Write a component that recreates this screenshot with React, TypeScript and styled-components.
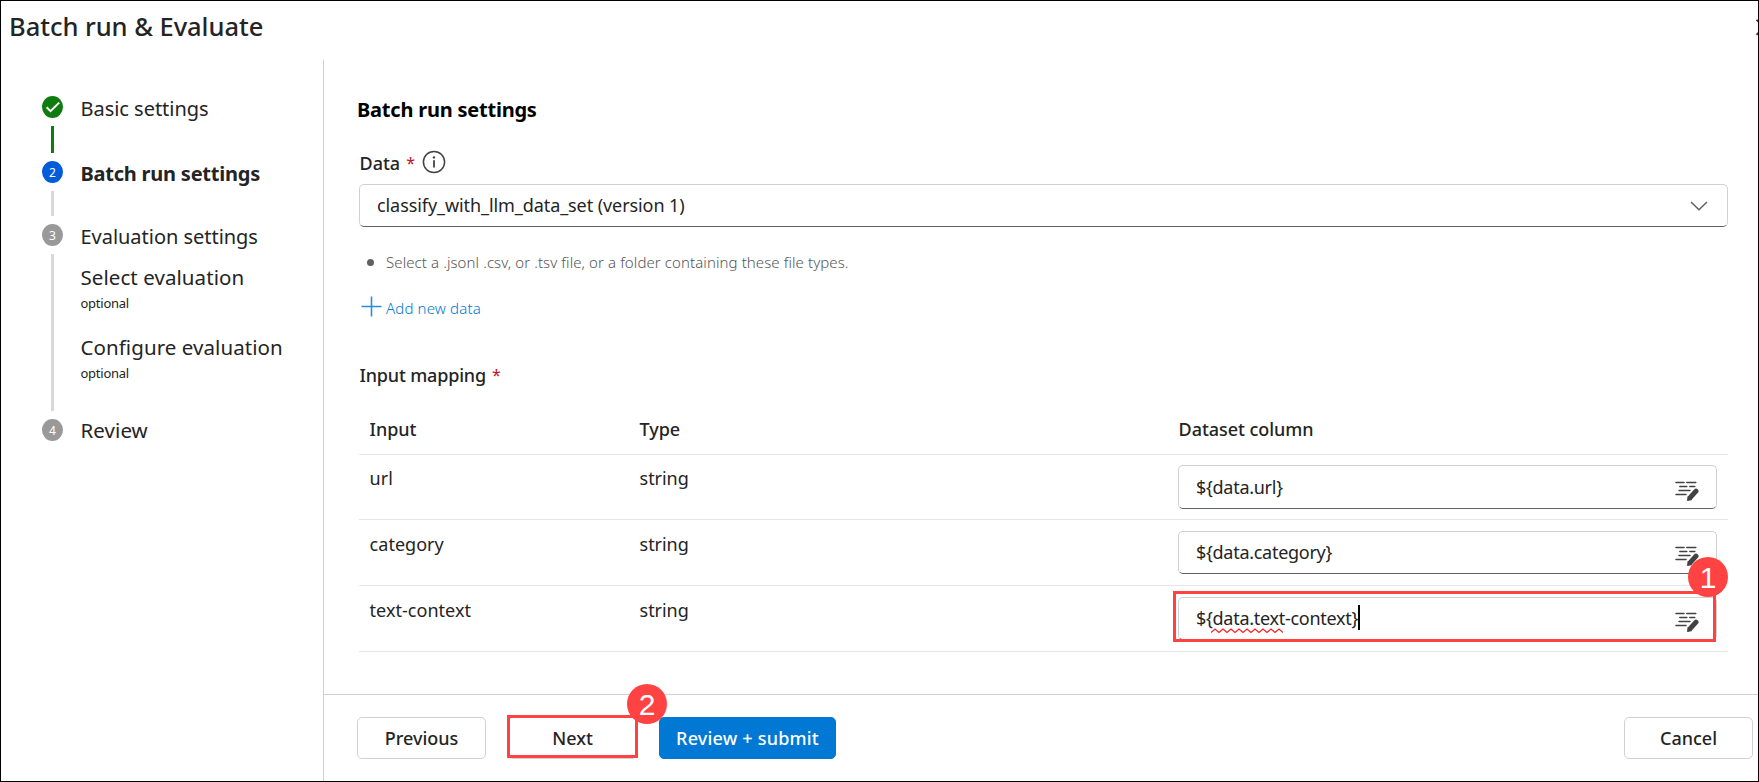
import React from "react";
import styled, { createGlobalStyle, css } from "styled-components";

const GlobalStyle = createGlobalStyle`
  * { box-sizing: border-box; }
  body {
    margin: 0;
    background: #fff;
    color: #242424;
    font-family: "Noto Sans", "Open Sans", sans-serif;
    font-size: 18px;
  }
`;

const Dialog = styled.div`
  width: 1759px;
  height: 782px;
  border: 1px solid #000;
  background: #fff;
  display: flex;
  flex-direction: column;
  overflow: hidden;
`;

const Header = styled.header`
  height: 59px;
  flex: none;
  display: flex;
  justify-content: space-between;
  padding: 9px 0 0 8px;
  overflow: hidden;
`;

const Title = styled.h1`
  margin: 0;
  font-size: 25.5px;
  line-height: 32px;
  font-weight: 480;
  letter-spacing: -0.04px;
  white-space: nowrap;
`;

const CloseButton = styled.span`
  flex: none;
  width: 16px;
  height: 17px;
  margin: 9px -14px 0 0;
  svg { display: block; }
`;

const Body = styled.div`
  flex: 1;
  display: flex;
  min-height: 0;
`;

const Sidebar = styled.nav`
  width: 323px;
  flex: none;
  border-right: 1px solid #d1d1d1;
  padding: 36px 0 0 41px;
`;

const Step = styled.div<{ $height: number }>`
  display: flex;
  gap: 17.5px;
  height: ${(p) => p.$height}px;
`;

const Rail = styled.div`
  width: 21px;
  flex: none;
  display: flex;
  flex-direction: column;
  align-items: center;
`;

const markerColors = { done: "#107c10", current: "#015cda", pending: "#999999" };
type StepState = keyof typeof markerColors;

const Marker = styled.span<{ $state: StepState }>`
  width: 21px;
  height: 22px;
  flex: none;
  border-radius: 50%;
  background: ${(p) => markerColors[p.$state]};
  color: #fff;
  font-size: 12px;
  line-height: 23px;
  text-align: center;
  svg { display: block; }
`;

const Connector = styled.span<{ $done?: boolean }>`
  width: 3px;
  flex: 1;
  margin: 8px 0;
  background: ${(p) => (p.$done ? "#107c10" : "#d8d8d8")};
`;

const StepBody = styled.div<{ $shift?: number }>`
  margin-top: ${(p) => p.$shift ?? -1}px;
  white-space: nowrap;
`;

const StepLabel = styled.div<{ $current?: boolean }>`
  font-size: 20px;
  line-height: 28px;
  letter-spacing: ${(p) => (p.$current ? "-0.23px" : "-0.03px")};
  font-weight: ${(p) => (p.$current ? 700 : 400)};
`;

const SubStep = styled.div`
  margin-top: 12px;
  & + & { margin-top: 21px; }
`;

const SubStepLabel = styled.div`
  font-size: 20.5px;
  line-height: 28px;
  letter-spacing: 0.07px;
`;

const Optional = styled.div`
  margin-top: 3px;
  font-size: 13px;
  line-height: 18px;
  letter-spacing: -0.25px;
`;

const Main = styled.main`
  flex: 1;
  min-width: 0;
  display: flex;
  flex-direction: column;
`;

const Content = styled.section`
  flex: 1;
  padding: 36px 30px 0 35px;
`;

const Heading = styled.h2`
  margin: 0 0 25px -2px;
  color: #000;
  font-size: 20px;
  line-height: 28px;
  font-weight: 700;
  letter-spacing: -0.22px;
`;

const FieldLabel = styled.div<{ $spacing?: number }>`
  display: flex;
  align-items: center;
  height: 28px;
  padding-left: 0.5px;
  font-size: 18px;
  line-height: 28px;
  font-weight: 500;
  letter-spacing: ${(p) => p.$spacing ?? 0}px;
  svg { display: block; margin: -2px 0 0 7px; }
`;

const Required = styled.span`
  margin-left: 6px;
  color: #c50f1f;
  font-size: 16px;
  font-weight: 400;
`;

const fieldFrame = css`
  border: 1px solid #d1d1d1;
  border-bottom-color: #616161;
  border-radius: 5px;
  background: #fff;
  display: flex;
  align-items: center;
  justify-content: space-between;
`;

const Select = styled.div`
  ${fieldFrame}
  height: 43px;
  margin-top: 7px;
  padding: 0 19px 0 17px;
  line-height: 28px;
  letter-spacing: -0.08px;
  span { margin-top: -2px; }
`;

const Hint = styled.ul`
  margin: 23px 0 0;
  padding: 0 0 0 8px;
  list-style: none;
  color: #565656;
  font-size: 15px;
  font-weight: 350;
  line-height: 24px;
  letter-spacing: 0.09px;
  li { display: flex; align-items: center; gap: 12px; }
  li::before {
    content: "";
    width: 7px;
    height: 7px;
    margin-top: 1px;
    border-radius: 50%;
    background: #616161;
  }
`;

const AddLink = styled.a`
  display: flex;
  align-items: center;
  gap: 4px;
  height: 24px;
  margin: 22px 0 41px 2px;
  color: #0078d4;
  font-size: 15px;
  font-weight: 360;
  line-height: 24px;
  letter-spacing: 0.15px;
  svg { display: block; margin-top: -3px; }
`;

const Table = styled.div`
  margin-top: 11px;
`;

const Row = styled.div<{ $head?: boolean; $first?: boolean }>`
  display: grid;
  grid-template-columns: 270px 539px 560px;
  align-items: start;
  height: ${(p) => (p.$head ? 55 : p.$first ? 65 : 66)}px;
  padding-top: ${(p) => (p.$head ? 15 : p.$first ? 9 : 10)}px;
  border-bottom: 1px solid #e6e6e6;
  line-height: 28px;
  font-weight: ${(p) => (p.$head ? 500 : 400)};
`;

const Cell = styled.div<{ $spacing?: number; $field?: boolean }>`
  padding: ${(p) => (p.$field ? "0 11px 0 10px" : "0 10px 0 10.6px")};
  letter-spacing: ${(p) => p.$spacing ?? -0.05}px;
`;

const MappingInput = styled.div<{ $tall?: boolean }>`
  ${fieldFrame}
  position: relative;
  height: ${(p) => (p.$tall ? 44 : 43)}px;
  margin-top: 1px;
  padding: 0 17px;
  letter-spacing: -0.28px;
  & > svg { display: block; margin-top: ${(p) => (p.$tall ? 8 : 7)}px; }
`;

const Value = styled.span<{ $lift?: boolean }>`
  position: relative;
  display: flex;
  align-items: center;
  margin-top: ${(p) => (p.$lift ? -2 : 0)}px;
`;

const Squiggle = styled.svg`
  position: absolute;
  left: 15px;
  top: 24px;
`;

const Caret = styled.span`
  width: 2px;
  height: 25px;
  background: #000;
`;

const Highlight = styled.span<{ $x: number; $y: number; $w: number; $h: number }>`
  position: absolute;
  left: ${(p) => p.$x}px;
  top: ${(p) => p.$y}px;
  width: ${(p) => p.$w}px;
  height: ${(p) => p.$h}px;
  border: 3px solid #ff4343;
  pointer-events: none;
`;

const Badge = styled.span<{ $x: number; $y: number }>`
  position: absolute;
  left: ${(p) => p.$x}px;
  top: ${(p) => p.$y}px;
  width: 40px;
  height: 40px;
  border-radius: 50%;
  background: #ff4343;
  color: #fff;
  font: 400 30px/41px "Liberation Sans", Arial, sans-serif;
  letter-spacing: 0;
  text-align: center;
  z-index: 1;
`;

const Footer = styled.footer`
  height: 87px;
  flex: none;
  display: flex;
  gap: 22px;
  padding: 22px 5px 0 33px;
  border-top: 1px solid #d1d1d1;
`;

const Button = styled.div<{ $primary?: boolean; $end?: boolean }>`
  position: relative;
  width: ${(p) => (p.$primary ? 177 : 129)}px;
  height: 42px;
  margin-left: ${(p) => (p.$end ? "auto" : "0")};
  border: 1px solid ${(p) => (p.$primary ? "#0078d4" : "#d1d1d1")};
  border-radius: 5px;
  background: ${(p) => (p.$primary ? "#0078d4" : "#fff")};
  color: ${(p) => (p.$primary ? "#fff" : "#242424")};
  font-weight: 500;
  line-height: 41px;
  letter-spacing: ${(p) => (p.$primary ? "0.2px" : "0")};
  text-align: center;
  white-space: nowrap;
`;

const CheckIcon = () => (
  <svg width="21" height="22" viewBox="0 0 21 22" fill="none" stroke="#fff" strokeWidth="2">
    <path d="M4.6 11.2l3.9 3.9L17.2 6.6" />
  </svg>
);

const CloseIcon = () => (
  <svg width="16" height="17" viewBox="0 0 16 17" fill="none" stroke="#333" strokeWidth="1.8">
    <path d="M0.5 0.8l15 15M0.5 15.8l15-15" />
  </svg>
);

const InfoIcon = () => (
  <svg width="24" height="24" viewBox="0 0 24 24" fill="none" stroke="#424242">
    <circle cx="12" cy="12" r="10.6" strokeWidth="1.5" />
    <path d="M12 10.2v7.3" strokeWidth="1.8" />
    <circle cx="12" cy="7.4" r="1.2" fill="#424242" stroke="none" />
  </svg>
);

const ChevronIcon = () => (
  <svg width="18" height="10" viewBox="0 0 18 10" fill="none" stroke="#616161" strokeWidth="1.5">
    <path d="M1 1l8 7.8L17 1" />
  </svg>
);

const PlusIcon = () => (
  <svg width="21" height="21" viewBox="0 0 21 21" fill="none" stroke="#2b8cdb" strokeWidth="1.6">
    <path d="M10.5 0.5v20M0.5 10.5h20" />
  </svg>
);

const EditIcon = () => (
  <svg width="24" height="20" viewBox="0 0 24 20" fill="none" stroke="#424242" strokeWidth="1.5" strokeLinecap="round">
    <path d="M1 1.5h8M11.8 1.5h9M4.8 5.5h7M14.8 5.5h5M4 9.5h11M1 13.5h10" />
    <path d="M21 10.2l-5.4 6" strokeWidth="5" />
    <path d="M12.4 19.4l0.6-4.2 3.6 3.2z" fill="#424242" strokeWidth="0.8" strokeLinejoin="round" />
  </svg>
);

const rows = [
  { name: "url", value: "${data.url}" },
  { name: "category", value: "${data.category}" },
  { name: "text-context", value: "${data.text-context}", active: true },
];

const wave = "M0 4.5" + Array.from({ length: 9 }, () => "l4 -3.5l4 3.5").join("");

export default function App() {
  return (
    <Dialog>
      <GlobalStyle />
      <Header>
        <Title>Batch run &amp; Evaluate</Title>
        <CloseButton><CloseIcon /></CloseButton>
      </Header>
      <Body>
        <Sidebar>
          <Step $height={65}>
            <Rail><Marker $state="done"><CheckIcon /></Marker><Connector $done /></Rail>
            <StepBody><StepLabel>Basic settings</StepLabel></StepBody>
          </Step>
          <Step $height={63}>
            <Rail><Marker $state="current">2</Marker><Connector /></Rail>
            <StepBody><StepLabel $current>Batch run settings</StepLabel></StepBody>
          </Step>
          <Step $height={195}>
            <Rail><Marker $state="pending">3</Marker><Connector /></Rail>
            <StepBody>
              <StepLabel>Evaluation settings</StepLabel>
              <SubStep>
                <SubStepLabel>Select evaluation</SubStepLabel>
                <Optional>optional</Optional>
              </SubStep>
              <SubStep>
                <SubStepLabel>Configure evaluation</SubStepLabel>
                <Optional>optional</Optional>
              </SubStep>
            </StepBody>
          </Step>
          <Step $height={28}>
            <Rail><Marker $state="pending">4</Marker></Rail>
            <StepBody $shift={-3}><SubStepLabel>Review</SubStepLabel></StepBody>
          </Step>
        </Sidebar>
        <Main>
          <Content>
            <Heading>Batch run settings</Heading>
            <FieldLabel>Data<Required>*</Required><InfoIcon /></FieldLabel>
            <Select><span>classify_with_llm_data_set (version 1)</span><ChevronIcon /></Select>
            <Hint>
              <li>Select a .jsonl .csv, or .tsv file, or a folder containing these file types.</li>
            </Hint>
            <AddLink><PlusIcon />Add new data</AddLink>
            <FieldLabel $spacing={-0.17}>Input mapping<Required>*</Required></FieldLabel>
            <Table>
              <Row $head>
                <Cell>Input</Cell>
                <Cell>Type</Cell>
                <Cell>Dataset column</Cell>
              </Row>
              {rows.map((row, i) => (
                <Row key={row.name} $first={i === 0}>
                  <Cell $spacing={0.03}>{row.name}</Cell>
                  <Cell>string</Cell>
                  <Cell $field>
                    <MappingInput $tall={i === 0}>
                      <Value $lift={i > 0}>
                        {row.value}
                        {row.active && <Caret />}
                        {row.active && (
                          <Squiggle width="72" height="5" viewBox="0 0 72 5" fill="none" stroke="#f02020" strokeWidth="1.2">
                            <path d={wave} />
                          </Squiggle>
                        )}
                      </Value>
                      <EditIcon />
                      {row.active && <Highlight $x={-6} $y={-7} $w={543} $h={51} />}
                      {row.active && <Badge $x={509} $y={-41}>1</Badge>}
                    </MappingInput>
                  </Cell>
                </Row>
              ))}
            </Table>
          </Content>
          <Footer>
            <Button>Previous</Button>
            <Button>
              Next
              <Highlight $x={-2} $y={-3} $w={131} $h={43} />
              <Badge $x={118} $y={-34}>2</Badge>
            </Button>
            <Button $primary>Review + submit</Button>
            <Button $end>Cancel</Button>
          </Footer>
        </Main>
      </Body>
    </Dialog>
  );
}
